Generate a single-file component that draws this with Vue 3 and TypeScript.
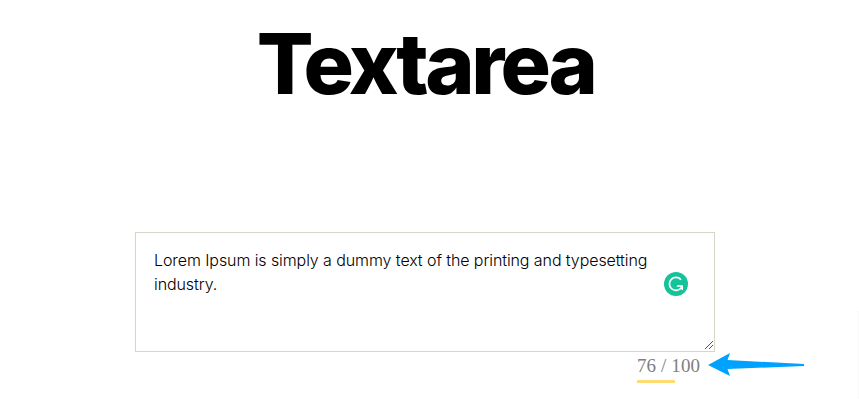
<script setup lang="ts">
import { ref, computed } from 'vue'

const limit = 100
const text = ref('Lorem Ipsum is simply a dummy text of the printing and typesetting industry.')
const count = computed(() => text.value.length)
</script>

<template>
  <main class="page">
    <h1 class="title">Textarea</h1>
    <section class="field">
      <textarea v-model="text" class="input" :maxlength="limit" spellcheck="false"></textarea>
      <svg class="grip" viewBox="0 0 10 10">
        <path d="M1 9L9 1M5 9L9 5" fill="none" stroke="#555" />
      </svg>
      <svg class="badge" viewBox="0 0 24 24">
        <circle cx="12" cy="12" r="12" fill="#15c39a" />
        <path d="M17 7.8A6.5 6.5 0 1 0 16.8 16.2" fill="none" stroke="#fff" stroke-width="1.7" />
        <path d="M13.4 13.2H19V18.6L17.4 17.2L15.8 17.6L16.6 14.8H12.4Z" fill="#fff" />
      </svg>
      <div class="counter">
        <span class="count">{{ count }} / {{ limit }}</span>
        <svg class="arrow" viewBox="0 0 96 26">
          <path d="M0 13L22 1L19.5 8L96 12V14L19.5 17L22 24Z" fill="#00a2ff" />
        </svg>
      </div>
      <div class="mark"></div>
    </section>
    <div class="edge"></div>
  </main>
</template>

<style>
body { background: #fff; }
</style>

<style scoped>
.page {
  position: relative;
  height: 418px;
  overflow: hidden;
}
.title {
  margin: 0;
  padding: 16px 8px 0 0;
  text-align: center;
  font: 800 84px/96px Inter, sans-serif;
  letter-spacing: -3.5px;
  color: #000;
}
.field {
  position: relative;
  width: 580px;
  margin: 120px 0 0 135px;
}
.input {
  display: block;
  box-sizing: border-box;
  width: 580px;
  height: 120px;
  padding: 15px 18px;
  border: 1px solid #d8d4c8;
  outline: none;
  resize: none;
  background: #fff;
  font: 300 16px/24px Inter, sans-serif;
  letter-spacing: -0.085px;
  color: #000;
}
.grip {
  position: absolute;
  right: 1px;
  top: 108px;
  width: 10px;
  height: 10px;
}
.badge {
  position: absolute;
  left: 529px;
  top: 40px;
  width: 24px;
  height: 24px;
}
.counter {
  display: flex;
  padding-left: 502px;
  height: 28px;
}
.count {
  flex: none;
  width: 71px;
  font: 19px/28px "Liberation Serif", serif;
  letter-spacing: 0.1px;
  color: #808080;
}
.arrow {
  flex: none;
  width: 96px;
  height: 26px;
}
.mark {
  width: 38px;
  height: 3px;
  margin-left: 502px;
  background: #ffdc73;
}
.edge {
  position: absolute;
  right: 0;
  top: 311px;
  width: 1px;
  height: 88px;
  background: #fafafa;
}
</style>
